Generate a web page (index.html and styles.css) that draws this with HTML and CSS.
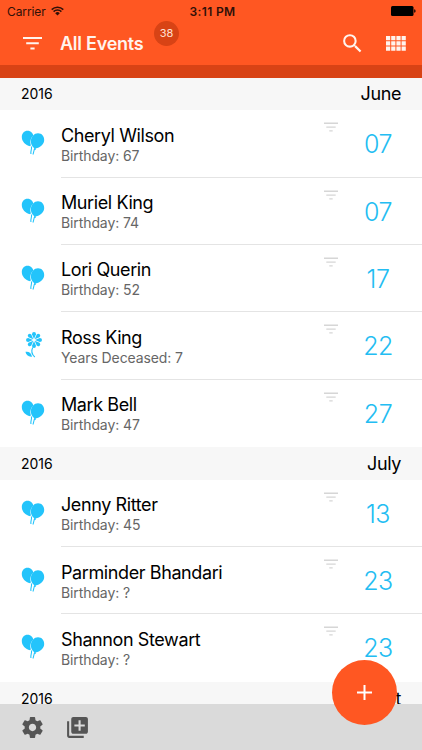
FILE: index.html
```
<!DOCTYPE html>
<html lang="en">
<head>
    <meta charset="UTF-8">
    <meta name="viewport" content="width=device-width, initial-scale=1.0">
    <title>All Events</title>
    <link rel="stylesheet" href="styles.css">
</head>
<body>
    <!-- Shared icons -->
    <svg class="symbols" width="0" height="0">
        <symbol id="balloons" viewBox="0 0 24 26">
            <path d="M6.500 .800C10 .800 12.200 3.500 12.200 5.700C9.700 7.800 8.700 11.500 9.900 15.300L9.100 16.200C4.500 15.200 .800 11.500 .800 7C.800 3.500 3.200 .800 6.500 .800Z"/>
            <path d="M17 3.300C20.800 3.300 23.200 6.200 23.200 10C23.200 14.200 19.300 17.700 14.600 18.400L15 19.700H12.600L13.300 18.200C11 16.600 9.700 13.800 9.900 10.800C10.200 6.600 13.200 3.300 17 3.300Z"/>
            <path class="string" d="M10.400 16.500C11.300 18.800 9.300 20.500 9.900 24M13.700 19C12.300 21 13 22.500 11.900 24.500"/>
        </symbol>
        <symbol id="flower" viewBox="0 0 18 26">
            <g id="petals">
                <path id="petal" d="M10 7L8 2.200Q8 0 10 0Q12 0 12 2.200Z"/>
                <use href="#petal" transform="rotate(45 10 8)"/>
                <use href="#petal" transform="rotate(90 10 8)"/>
                <use href="#petal" transform="rotate(135 10 8)"/>
                <use href="#petal" transform="rotate(180 10 8)"/>
                <use href="#petal" transform="rotate(225 10 8)"/>
                <use href="#petal" transform="rotate(270 10 8)"/>
                <use href="#petal" transform="rotate(315 10 8)"/>
            </g>
            <path class="stem" d="M8.700 15.500C7 19 8 22.500 10.800 25"/>
            <path d="M1.500 19.800C4.500 19 7.500 21 8 24.700C4.500 25.200 2 23 1.500 19.800Z"/>
        </symbol>
        <symbol id="lines" viewBox="0 0 14 10">
            <path d="M0 .500H14V1.900H0ZM2.300 4.400H11.700V5.700H2.300ZM5.300 8.300H8.700V9.500H5.300Z"/>
        </symbol>
    </svg>

    <div class="app">
        <div class="status-bar">
            <div class="carrier">
                <span>Carrier</span>
                <svg width="13" height="10" viewBox="0 0 13 10">
                    <path d="M.700 3.600A8.300 8.300 0 0 1 12.300 3.600M2.600 5.600A5.500 5.500 0 0 1 10.400 5.600" fill="none" stroke="#301008" stroke-width="1.500"/>
                    <path d="M6.500 9.600L4.200 7.200A3.300 3.300 0 0 1 8.800 7.200Z" fill="#301008"/>
                </svg>
            </div>
            <div class="time">3:11 PM</div>
            <svg class="battery" width="25" height="10" viewBox="0 0 25 10">
                <rect width="22.500" height="10" rx="1.500"/>
                <path d="M23.200 3.200Q24.600 3.500 24.600 5T23.200 6.800Z"/>
            </svg>
        </div>

        <div class="nav-bar">
            <svg class="menu-icon" width="19" height="13" viewBox="0 0 19 13">
                <path d="M0 0H19V2H0ZM3.200 5.200H15.800V7.300H3.200ZM7.400 10.500H11.600V12.500H7.400Z"/>
            </svg>
            <h1>All Events</h1>
            <span class="badge">38</span>
            <svg class="search-icon" width="25" height="25" viewBox="0 0 24 24">
                <path d="M15.500 14h-.79l-.28-.27A6.471 6.471 0 0 0 16 9.500 6.500 6.500 0 1 0 9.500 16c1.610 0 3.090-.59 4.230-1.570l.27.280v.79l5 4.990L20.490 19l-4.990-5zm-6 0C7.010 14 5 11.990 5 9.500S7.010 5 9.500 5 14 7.010 14 9.500 11.990 14 9.500 14z"/>
            </svg>
            <svg class="grid-icon" width="20" height="15" viewBox="0 0 20 15">
                <path d="M0 0h4.200v4.200H0zM5.200 0h4.200v4.200H5.200zM10.400 0h4.200v4.200h-4.200zM15.600 0h4.200v4.200h-4.200zM0 5.300h4.200v4.200H0zM5.200 5.300h4.200v4.200H5.200zM10.400 5.300h4.200v4.200h-4.200zM15.600 5.300h4.200v4.200h-4.200zM0 10.600h4.200v4.200H0zM5.200 10.600h4.200v4.200H5.200zM10.400 10.600h4.200v4.200h-4.200zM15.600 10.600h4.200v4.200h-4.200z"/>
            </svg>
        </div>
        <div class="nav-strip"></div>

        <div class="events">
            <div class="month"><span class="year">2016</span><span>June</span></div>
            <div class="event">
                <svg class="type"><use href="#balloons"/></svg>
                <div class="details">
                    <div class="text"><div class="name">Cheryl Wilson</div><div class="note">Birthday: 67</div></div>
                    <svg class="handle"><use href="#lines"/></svg>
                    <div class="day">07</div>
                </div>
            </div>
            <div class="event">
                <svg class="type"><use href="#balloons"/></svg>
                <div class="details">
                    <div class="text"><div class="name">Muriel King</div><div class="note">Birthday: 74</div></div>
                    <svg class="handle"><use href="#lines"/></svg>
                    <div class="day">07</div>
                </div>
            </div>
            <div class="event">
                <svg class="type"><use href="#balloons"/></svg>
                <div class="details">
                    <div class="text"><div class="name">Lori Querin</div><div class="note">Birthday: 52</div></div>
                    <svg class="handle"><use href="#lines"/></svg>
                    <div class="day">17</div>
                </div>
            </div>
            <div class="event">
                <svg class="type"><use href="#flower"/></svg>
                <div class="details">
                    <div class="text"><div class="name">Ross King</div><div class="note">Years Deceased: 7</div></div>
                    <svg class="handle"><use href="#lines"/></svg>
                    <div class="day">22</div>
                </div>
            </div>
            <div class="event last">
                <svg class="type"><use href="#balloons"/></svg>
                <div class="details">
                    <div class="text"><div class="name">Mark Bell</div><div class="note">Birthday: 47</div></div>
                    <svg class="handle"><use href="#lines"/></svg>
                    <div class="day">27</div>
                </div>
            </div>

            <div class="month"><span class="year">2016</span><span>July</span></div>
            <div class="event">
                <svg class="type"><use href="#balloons"/></svg>
                <div class="details">
                    <div class="text"><div class="name">Jenny Ritter</div><div class="note">Birthday: 45</div></div>
                    <svg class="handle"><use href="#lines"/></svg>
                    <div class="day">13</div>
                </div>
            </div>
            <div class="event">
                <svg class="type"><use href="#balloons"/></svg>
                <div class="details">
                    <div class="text"><div class="name">Parminder Bhandari</div><div class="note">Birthday: ?</div></div>
                    <svg class="handle"><use href="#lines"/></svg>
                    <div class="day">23</div>
                </div>
            </div>
            <div class="event last">
                <svg class="type"><use href="#balloons"/></svg>
                <div class="details">
                    <div class="text"><div class="name">Shannon Stewart</div><div class="note">Birthday: ?</div></div>
                    <svg class="handle"><use href="#lines"/></svg>
                    <div class="day">23</div>
                </div>
            </div>

            <div class="month"><span class="year">2016</span><span>August</span></div>
        </div>

        <div class="toolbar">
            <svg width="25" height="25" viewBox="0 0 24 24">
                <path d="M19.430 12.980c.04-.32.07-.64.07-.98s-.03-.66-.07-.98l2.110-1.650c.19-.15.24-.42.12-.64l-2-3.460c-.12-.22-.39-.3-.61-.22l-2.490 1c-.52-.4-1.080-.73-1.690-.98l-.38-2.650C14.460 2.180 14.250 2 14 2h-4c-.25 0-.46.18-.49.42l-.38 2.650c-.61.25-1.170.59-1.690.98l-2.490-1c-.23-.09-.49 0-.61.22l-2 3.460c-.13.22-.07.49.12.64l2.110 1.650c-.04.32-.07.65-.07.98s.03.66.07.98l-2.110 1.650c-.19.15-.24.42-.12.64l2 3.460c.12.22.39.3.61.22l2.490-1c.52.4 1.080.73 1.690.98l.38 2.650c.03.24.24.42.49.42h4c.25 0 .46-.18.49-.42l.38-2.650c.61-.25 1.170-.59 1.690-.98l2.490 1c.23.09.49 0 .61-.22l2-3.460c.12-.22.07-.49-.12-.64l-2.110-1.650zM12 15.500c-1.930 0-3.500-1.570-3.500-3.500s1.570-3.500 3.500-3.500 3.500 1.570 3.500 3.500-1.570 3.500-3.500 3.500z"/>
            </svg>
            <svg width="25" height="25" viewBox="0 0 24 24">
                <path d="M4 6H2v14c0 1.100.9 2 2 2h14v-2H4V6zm16-4H8c-1.100 0-2 .9-2 2v12c0 1.100.9 2 2 2h12c1.100 0 2-.9 2-2V4c0-1.100-.9-2-2-2zm-1 9h-4v4h-2v-4H9V9h4V5h2v4h4v2z"/>
            </svg>
        </div>

        <div class="add-button">
            <svg width="15" height="15" viewBox="0 0 15 15">
                <path d="M6.500 0H8.500V6.500H15V8.500H8.500V15H6.500V8.500H0V6.500H6.500Z"/>
            </svg>
        </div>
    </div>
</body>
</html>
```
FILE: styles.css
```
body {
    margin: 0;
    font-family: Inter, "Liberation Sans", sans-serif;
    color: #000;
    background-color: #fff;
}

.symbols {
    display: block;
}

.app {
    position: relative;
    display: flex;
    flex-direction: column;
    width: 422px;
    height: 750px;
    overflow: hidden;
}

/* Top bars */
.status-bar {
    display: grid;
    grid-template-columns: 1fr auto 1fr;
    align-items: center;
    flex: none;
    height: 22px;
    padding: 0 6px 0 7px;
    background-color: #ff5722;
    font-size: 12px;
    color: #301008;
}

.carrier {
    display: flex;
    align-items: center;
    gap: 5px;
    letter-spacing: -0.1px;
}

.time {
    padding-left: 2px;
    font-weight: 600;
    letter-spacing: 0.35px;
}

.battery {
    justify-self: end;
    fill: #000;
}

.nav-bar {
    display: flex;
    align-items: center;
    flex: none;
    height: 42px;
    padding: 0 16px 1px 23px;
    background-color: #ff5722;
    fill: #fff4ee;
}

h1 {
    width: 94px;
    margin: 0 0 0 18px;
    font-size: 18px;
    font-weight: 600;
    letter-spacing: -0.25px;
    white-space: nowrap;
    color: #fff4ee;
}

.badge {
    width: 25px;
    height: 25px;
    margin-bottom: 20px;
    border-radius: 50%;
    background-color: #d84315;
    font-size: 11px;
    line-height: 25px;
    text-align: center;
    color: #ffe0d4;
}

.search-icon {
    margin-left: auto;
}

.grid-icon {
    margin-left: 21px;
}

.nav-strip {
    flex: none;
    height: 12.5px;
    background-color: #d84315;
}

/* Event list */
.events {
    flex: 1;
    min-height: 0;
    overflow: hidden;
}

.month {
    display: flex;
    align-items: center;
    justify-content: space-between;
    box-sizing: border-box;
    height: 32.9px;
    padding: 0 21px;
    background-color: #f7f7f7;
    font-size: 18px;
    letter-spacing: -0.4px;
}

.year {
    font-size: 14px;
    letter-spacing: 0;
}

.event {
    display: flex;
    height: 67.3px;
}

.type {
    width: 24px;
    height: 26px;
    margin: 20px 16px 0 21px;
    fill: #23c4fb;
}

.string,
.stem {
    fill: none;
    stroke: #23c4fb;
    stroke-width: 1.1;
}

.details {
    display: flex;
    flex: 1;
    box-sizing: border-box;
    border-bottom: 1px solid #e4e4e4;
}

.last .details {
    border-bottom: none;
}

.text {
    flex: 1;
    padding-top: 13.5px;
    white-space: nowrap;
}

.name {
    font-size: 18px;
    line-height: 23px;
    letter-spacing: -0.4px;
}

.note {
    font-size: 14px;
    line-height: 17px;
    letter-spacing: -0.1px;
    color: #666;
}

.handle {
    width: 14px;
    height: 10px;
    margin-top: 12px;
    fill: #d6d6d6;
}

.day {
    width: 84px;
    padding: 19px 4px 0 0;
    box-sizing: border-box;
    font-size: 25px;
    font-weight: 300;
    line-height: 30px;
    letter-spacing: -0.5px;
    text-align: center;
    color: #23bdf2;
}

/* Bottom bar */
.toolbar {
    display: flex;
    align-items: center;
    gap: 20px;
    flex: none;
    height: 46px;
    padding-left: 20px;
    background-color: #dadada;
    fill: #555;
}

.add-button {
    position: absolute;
    right: 25px;
    bottom: 25px;
    display: flex;
    align-items: center;
    justify-content: center;
    width: 65px;
    height: 65px;
    border-radius: 50%;
    background-color: #ff5722;
    fill: #fff;
}
```
